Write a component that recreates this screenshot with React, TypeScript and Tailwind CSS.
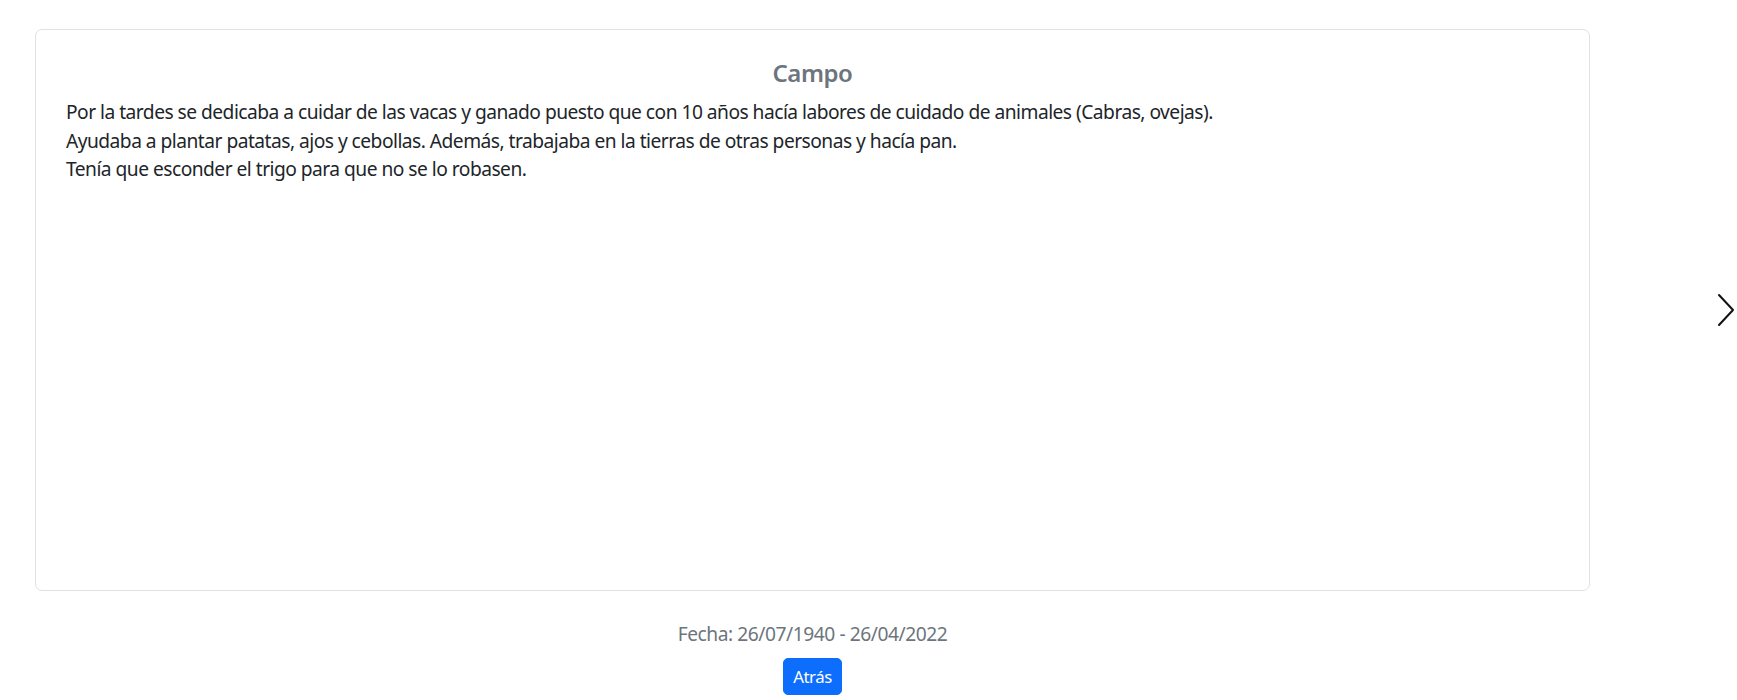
export default function App() {
  return (
    <div className="w-[1737px] h-[700px] bg-white text-[#212529] font-['Segoe_UI','Noto_Sans',sans-serif] text-[19.2px] leading-[28.8px] tracking-[-0.45px] overflow-hidden">
      {/* Carousel row */}
      <div className="flex items-center pt-[29px]">
        <div className="ml-[35px] w-[1555px] h-[562px] border border-[#dee2e6] rounded-[7px] px-[30px] pt-[29px]">
          <h5 className="text-center text-[24px] leading-[28.8px] font-semibold text-[#6c757d] mb-[10px]">Campo</h5>
          <div className="tracking-[-0.52px]">
            <p>Por la tardes se dedicaba a cuidar de las vacas y ganado puesto que con 10 años hacía labores de cuidado de animales (Cabras, ovejas).</p>
            <p>Ayudaba a plantar patatas, ajos y cebollas. Además, trabajaba en la tierras de otras personas y hacía pan.</p>
            <p>Tenía que esconder el trigo para que no se lo robasen.</p>
          </div>
        </div>
        <div className="flex-1 flex justify-end pr-[2px]">
          <svg width="18" height="34" viewBox="0 0 18 34" fill="none" stroke="#111" strokeWidth="2" strokeLinecap="round" strokeLinejoin="round">
            <path d="M2 2 L16 17 L2 32" />
          </svg>
        </div>
      </div>

      {/* Footer */}
      <div className="ml-[35px] w-[1555px] flex flex-col items-center mt-[29px]">
        <p className="text-[#6c757d]">Fecha: 26/07/1940 - 26/04/2022</p>
        <button className="mt-[9px] bg-[#0d6efd] text-white text-[16.8px] leading-[25.2px] px-[9px] py-[5px] rounded-[5px] border border-[#0d6efd]">Atrás</button>
      </div>
    </div>
  );
}
